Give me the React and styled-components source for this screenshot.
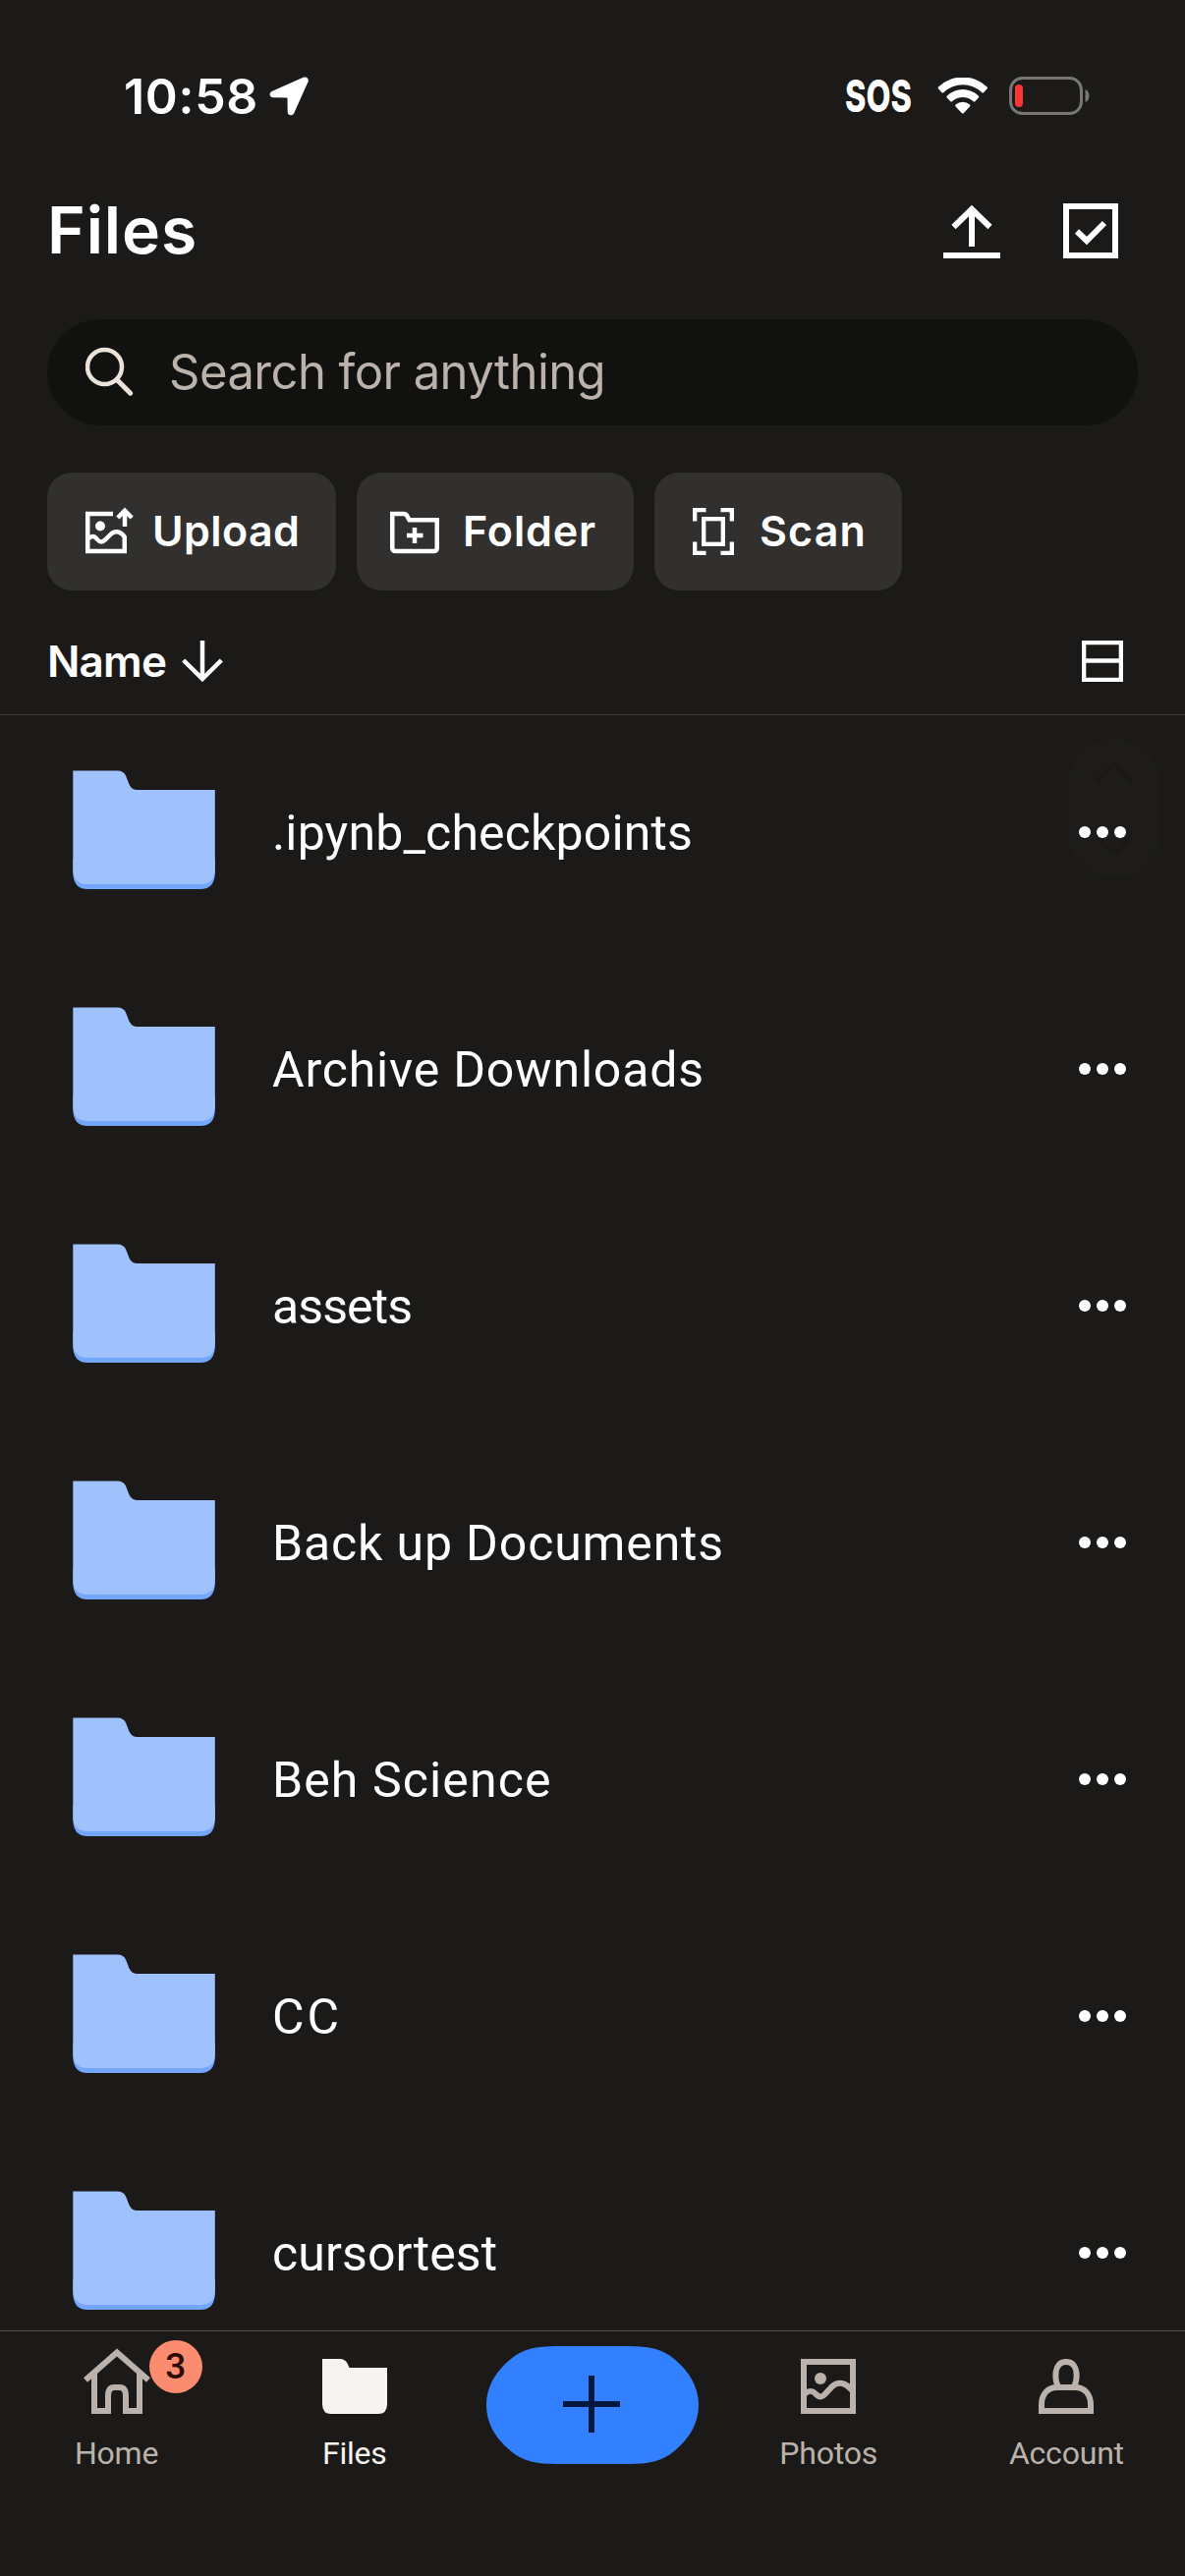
import React from "react";
import styled, { createGlobalStyle } from "styled-components";

const color = {
  bg: "#1b1a18",
  search: "#11120f",
  chip: "#31302e",
  text: "#ffffff",
  muted: "#bbb3ab",
  cream: "#ebe2d8",
  blue: "#3380ff",
  navy: "#00183d",
};

const GlobalStyle = createGlobalStyle`
  *, *::before, *::after { box-sizing: border-box; }
  body { margin: 0; background: ${color.bg}; }
  button { border: 0; background: none; padding: 0; margin: 0; color: inherit; font: inherit; }
  svg { display: block; flex: none; }
`;

const Screen = styled.div`
  width: 1206px;
  height: 2622px;
  display: flex;
  flex-direction: column;
  overflow: hidden;
  background: ${color.bg};
  color: ${color.text};
  font-family: Inter, "Liberation Sans", sans-serif;
`;

const StatusBar = styled.div`
  flex: none;
  height: 196px;
  display: flex;
  justify-content: space-between;
  align-items: flex-start;
  padding: 76px 97px 0 126px;
`;

const StatusGroup = styled.div`
  display: flex;
  align-items: center;
  height: 44px;
`;

const Time = styled.span`
  width: 148px;
  font-size: 50px;
  font-weight: 600;
  line-height: 44px;
  letter-spacing: 0.7px;
  white-space: nowrap;
`;

const Carrier = styled.span`
  width: 94px;
  font-size: 45px;
  font-weight: 800;
  line-height: 44px;
  transform: scaleX(0.72);
  transform-origin: left center;
  white-space: nowrap;
`;

const WifiSlot = styled.span`
  margin-right: 21px;
`;

const Header = styled.header`
  flex: none;
  height: 129px;
  display: flex;
  justify-content: space-between;
  align-items: flex-start;
  padding: 0 68px 0 48px;
`;

const Title = styled.h1`
  margin: 0;
  font-size: 66px;
  font-weight: 600;
  line-height: 77px;
  letter-spacing: 0.9px;
`;

const HeaderActions = styled.div`
  display: flex;
  gap: 64px;
  padding-top: 11px;
`;

const SearchField = styled.div`
  flex: none;
  height: 108px;
  margin: 0 48px;
  padding: 0 39px;
  border-radius: 54px;
  background: ${color.search};
  display: flex;
  align-items: center;
  gap: 33px;
`;

const Placeholder = styled.span`
  color: ${color.muted};
  font-size: 49px;
  letter-spacing: -0.55px;
  line-height: 60px;
`;

const Chips = styled.div`
  flex: none;
  display: flex;
  gap: 21px;
  padding: 48px 48px 0;
`;

const Chip = styled.button`
  height: 120px;
  width: ${(p) => p.$width}px;
  padding: 0 0 2px ${(p) => p.$inset}px;
  display: flex;
  align-items: center;
  gap: ${(p) => p.$gap}px;
  border-radius: 25px;
  background: ${color.chip};
  font-size: 43px;
  font-weight: 600;
  letter-spacing: ${(p) => p.$tracking}px;
`;

const SortBar = styled.div`
  flex: none;
  height: 127px;
  padding: 18px 63px 0 48px;
  display: flex;
  align-items: center;
  justify-content: space-between;
  border-bottom: 1px solid #3b3a38;
`;

const SortButton = styled.button`
  display: flex;
  align-items: center;
  gap: 16px;
  font-size: 44px;
  font-weight: 600;
  letter-spacing: -0.8px;
`;

const List = styled.ul`
  flex: 1;
  min-height: 0;
  margin: 0;
  padding: 0;
  list-style: none;
  overflow: hidden;
  position: relative;
`;

const Row = styled.li`
  height: 241px;
  display: flex;
  align-items: center;
  padding: 0 60px 3px 74px;

  > svg {
    margin-bottom: 4px;
  }
`;

const FileName = styled.span`
  flex: 1;
  margin-left: 57px;
  padding-top: 2px;
  font-family: Roboto, "Liberation Sans", sans-serif;
  font-size: 50px;
  line-height: 60px;
  letter-spacing: ${(p) => p.$tracking}px;
`;

const ScrollHandle = styled.div`
  position: absolute;
  z-index: 0;
  top: 24px;
  right: 26px;
  width: 93px;
  height: 142px;
  border-radius: 46px;
  background: #1d1c1a;
  display: flex;
  flex-direction: column;
  align-items: center;
  justify-content: space-between;
  padding: 22px 0;
`;

const More = styled.button`
  display: flex;
  gap: 6px;
  position: relative;
  z-index: 1;
`;

const Dot = styled.span`
  width: 12px;
  height: 12px;
  border-radius: 50%;
  background: ${color.text};
`;

const TabBar = styled.nav`
  flex: none;
  height: 250px;
  border-top: 1px solid #57524b;
  display: grid;
  grid-template-columns: repeat(5, 1fr);
`;

const Tab = styled.button`
  display: flex;
  flex-direction: column;
  align-items: center;
  justify-content: flex-start;
  padding-top: 15px;
  padding-right: ${(p) => p.$shift || 0}px;
  color: ${(p) => (p.$active ? "#f6f4f0" : color.muted)};
  font-family: Roboto, "Liberation Sans", sans-serif;
  font-size: 32px;
  line-height: 40px;
  letter-spacing: -0.2px;
`;

const TabIcon = styled.span`
  position: relative;
  width: 72px;
  height: 72px;
  margin-bottom: 17px;
`;

const Badge = styled.span`
  position: absolute;
  left: 69px;
  top: -6px;
  width: 54px;
  height: 54px;
  border-radius: 50%;
  background: #fb8c6f;
  color: #2d0b05;
  font-family: Roboto, sans-serif;
  font-size: 37px;
  font-weight: 500;
  line-height: 54px;
  text-align: center;
`;

const LocationIcon = () => (
  <svg width="40" height="40" viewBox="0 0 40 40" fill="#fff">
    <path d="M34.6 .8 C38 -.6 41 2 39.400 5.600 L25.200 37.200 C23.600 40.500 18.800 39.800 18.700 36 L18.500 22.400 Q18.500 21.500 17.600 21.500 L4 21.300 C.200 21.200 -.700 16.600 2.600 14.900 Z" />
  </svg>
);

const WifiIcon = () => (
  <svg width="52" height="38" viewBox="0 0 52 38" fill="#fff">
    <path d="M1.200 11.600 Q0 10.500 1.300 9.300 A35.500 35.500 0 0 1 50.300 9.300 Q51.600 10.500 50.400 11.600 L47.300 15 Q46.300 16.100 45.100 15 A28 28 0 0 0 6.500 15 Q5.300 16.100 4.300 15 Z" />
    <path d="M9.800 20.500 Q8.700 19.500 9.900 18.400 A23 23 0 0 1 41.700 18.400 Q42.900 19.500 41.800 20.500 L38.500 24 Q37.500 25 36.300 24 A15.500 15.500 0 0 0 15.300 24 Q14.100 25 13.100 24 Z" />
    <path d="M18.600 29.400 Q17.500 28.300 18.800 27.300 A11 11 0 0 1 32.800 27.300 Q34.100 28.300 33 29.400 L26.900 36 Q25.800 37.200 24.700 36 Z" />
  </svg>
);

const BatteryIcon = () => (
  <svg width="82" height="40" viewBox="0 0 82 40">
    <rect x="1.500" y="1.500" width="72" height="36" rx="12" fill="none" stroke="#777674" strokeWidth="3" />
    <path d="M77.500 13 C82.800 15 82.800 24 77.500 26 Z" fill="#777674" />
    <rect x="6" y="8" width="8" height="23" rx="4" fill="#fc3436" />
  </svg>
);

const UploadIcon = () => (
  <svg width="58" height="56" viewBox="0 0 58 56" fill="none" stroke="#fff" strokeWidth="6">
    <path d="M29 44 V6 M10.500 24 L29 6 L47.500 24 M0 53 H58" />
  </svg>
);

const CheckboxIcon = () => (
  <svg width="56" height="56" viewBox="0 0 56 56" fill="none" stroke="#fff" strokeWidth="6">
    <rect x="3" y="3" width="50" height="50" />
    <path d="M14 28.500 L24 38 L42 20" />
  </svg>
);

const SearchIcon = () => (
  <svg width="52" height="52" viewBox="0 0 52 52" fill="none" stroke={color.cream} strokeWidth="4.500" strokeLinecap="round">
    <circle cx="19.500" cy="20.500" r="17.500" />
    <path d="M32 33.500 L45.700 47.200" strokeWidth="5" />
  </svg>
);

const ImageUploadIcon = () => (
  <svg width="49" height="48" viewBox="0 0 49 48" fill="none" stroke="#fff" strokeWidth="4.500">
    <path d="M28 7 H2.250 V45 H39.750 V30.500 C35.500 24.500 29.500 23.500 25.500 28 L21 32.500 C17.500 36.300 14.500 36.300 12 33 C8.500 28.500 6 29.500 2.500 32.500" />
    <path d="M40 20 V4 M32.800 11 L40 3.800 L47.200 11" />
    <circle cx="15" cy="19.500" r="5" fill="#fff" stroke="none" />
  </svg>
);

const NewFolderIcon = () => (
  <svg width="50" height="48" viewBox="0 0 50 48" fill="none" stroke="#fff" strokeWidth="4.500">
    <path d="M2.250 7 H14 Q16.300 7 17.500 9.500 L19.500 13.250 H47.750 V41.500 Q47.750 45 44.200 45 H5.800 Q2.250 45 2.250 41.500 Z" />
    <path d="M25 21 V37 M17 29 H33.500" />
  </svg>
);

const ScanIcon = () => (
  <svg width="42" height="50" viewBox="0 -2 42 50" fill="none" stroke="#fff" strokeWidth="4.300">
    <path d="M2.150 13.500 V2.150 H13.500 M28.500 2.150 H39.850 V13.500 M39.850 34.500 V45.850 H28.500 M13.500 45.850 H2.150 V34.500" />
    <rect x="11.200" y="11.200" width="19.600" height="25.600" />
  </svg>
);

const ArrowDownIcon = () => (
  <svg width="42" height="42" viewBox="0 0 42 42" fill="none" stroke="#fff" strokeWidth="4.500">
    <path d="M21 0 V39 M1.700 20 L21 39 L40.300 20" />
  </svg>
);

const ListViewIcon = () => (
  <svg width="42" height="42" viewBox="0 0 42 42" fill="none" stroke="#fff" strokeWidth="4.300">
    <path d="M2.150 2.150 H39.850 V39.850 H2.150 Z M2.150 20.500 H39.850" />
  </svg>
);

const FolderArt = () => (
  <svg width="146" height="122" viewBox="0 0 146 122">
    <path d="M.300 90 H144.800 V104 Q144.800 121 130 121 H15 Q.300 121 .300 104 Z" fill="#73a6fc" />
    <path d="M.300 .500 H45.500 Q52 .500 54.200 6 L57.500 14.500 Q60 20 66 20 H144.800 V101 Q144.800 116 130 116 H15 Q.300 116 .300 101 Z" fill="#9fc2fd" />
  </svg>
);

const ChevronUp = () => (
  <svg width="40" height="24" viewBox="0 0 40 24" fill="none" stroke="#1a1917" strokeWidth="4">
    <path d="M1.500 22 L20 3 L38.500 22" />
  </svg>
);

const ChevronDown = () => (
  <svg width="40" height="24" viewBox="0 0 40 24" fill="none" stroke="#1a1917" strokeWidth="4">
    <path d="M1.500 2 L20 21 L38.500 2" />
  </svg>
);

const HomeIcon = () => (
  <svg width="72" height="72" viewBox="0 0 72 72" fill="none" stroke="currentColor" strokeWidth="6">
    <path d="M4 34.500 L36 6.500 L68 34.500" />
    <path d="M13 27 V66 H27 V51 Q27 42 33 42 H39 Q45 42 45 51 V66 H59 V27" />
  </svg>
);

const FilesIcon = () => (
  <svg width="72" height="72" viewBox="0 0 72 72" fill="currentColor">
    <path d="M3 13 H21 Q26 13 28.500 17.500 L30.500 22 H69 V59 Q69 69 60 69 H12 Q3 69 3 59 Z" />
  </svg>
);

const PhotosIcon = () => (
  <svg width="72" height="72" viewBox="0 0 72 72" fill="none" stroke="currentColor" strokeWidth="6">
    <rect x="11" y="16" width="50" height="50" />
    <circle cx="28" cy="33" r="6" fill="currentColor" stroke="none" />
    <path d="M12 48.500 C17 44.500 20 45.500 23 48.500 C27 53 30 52 33 48.500 L40 41 C46 35.500 54 37 60 45" />
  </svg>
);

const AccountIcon = () => (
  <svg width="72" height="72" viewBox="0 0 72 72" fill="none" stroke="currentColor" strokeWidth="6">
    <path d="M29 43 C24 35.500 22.500 16 36 16 C49.500 16 48 35.500 43 43" />
    <path d="M11 66 V60 C11 49 17 42 27 42 H45 C55 42 61 49 61 60 V66 Z" />
  </svg>
);

const AddButtonArt = () => (
  <svg width="216" height="120" viewBox="0 0 216 120">
    <path d="M72 0 H144 C166 0 179 3 191 13 C207 26 216 42 216 60 C216 78 207 94 191 107 C179 117 166 120 144 120 H72 C50 120 37 117 25 107 C9 94 0 78 0 60 C0 42 9 26 25 13 C37 3 50 0 72 0 Z" fill={color.blue} />
    <path d="M78 59 H136 M107 30 V88" stroke={color.navy} strokeWidth="6" />
  </svg>
);

const chips = [
  { label: "Upload", Icon: ImageUploadIcon, width: 294, inset: 39, gap: 19, tracking: 0.4 },
  { label: "Folder", Icon: NewFolderIcon, width: 282, inset: 34, gap: 24, tracking: 0.9 },
  { label: "Scan", Icon: ScanIcon, width: 252, inset: 39, gap: 26, tracking: 1.1 },
];

const folders = [
  { name: ".ipynb_checkpoints", tracking: 0.15 },
  { name: "Archive Downloads", tracking: 0.8 },
  { name: "assets", tracking: -0.9 },
  { name: "Back up Documents", tracking: 0.85 },
  { name: "Beh Science", tracking: 1.1 },
  { name: "CC", tracking: 3 },
  { name: "cursortest", tracking: 0.1 },
];

export default function App() {
  return (
    <Screen>
      <GlobalStyle />
      <StatusBar>
        <StatusGroup>
          <Time>10:58</Time>
          <LocationIcon />
        </StatusGroup>
        <StatusGroup>
          <Carrier>SOS</Carrier>
          <WifiSlot>
            <WifiIcon />
          </WifiSlot>
          <BatteryIcon />
        </StatusGroup>
      </StatusBar>

      <Header>
        <Title>Files</Title>
        <HeaderActions>
          <UploadIcon />
          <CheckboxIcon />
        </HeaderActions>
      </Header>

      <SearchField>
        <SearchIcon />
        <Placeholder>Search for anything</Placeholder>
      </SearchField>

      <Chips>
        {chips.map(({ label, Icon, width, inset, gap, tracking }) => (
          <Chip key={label} $width={width} $inset={inset} $gap={gap} $tracking={tracking}>
            <Icon />
            {label}
          </Chip>
        ))}
      </Chips>

      <SortBar>
        <SortButton>
          Name
          <ArrowDownIcon />
        </SortButton>
        <ListViewIcon />
      </SortBar>

      <List>
        <ScrollHandle>
          <ChevronUp />
          <ChevronDown />
        </ScrollHandle>
        {folders.map(({ name, tracking }) => (
          <Row key={name}>
            <FolderArt />
            <FileName $tracking={tracking}>{name}</FileName>
            <More aria-label="More">
              <Dot />
              <Dot />
              <Dot />
            </More>
          </Row>
        ))}
      </List>

      <TabBar>
        <Tab $shift={4}>
          <TabIcon>
            <HomeIcon />
            <Badge>3</Badge>
          </TabIcon>
          Home
        </Tab>
        <Tab $active $shift={2}>
          <TabIcon>
            <FilesIcon />
          </TabIcon>
          Files
        </Tab>
        <Tab>
          <AddButtonArt />
        </Tab>
        <Tab $shift={2}>
          <TabIcon>
            <PhotosIcon />
          </TabIcon>
          Photos
        </Tab>
        <Tab>
          <TabIcon>
            <AccountIcon />
          </TabIcon>
          Account
        </Tab>
      </TabBar>
    </Screen>
  );
}
